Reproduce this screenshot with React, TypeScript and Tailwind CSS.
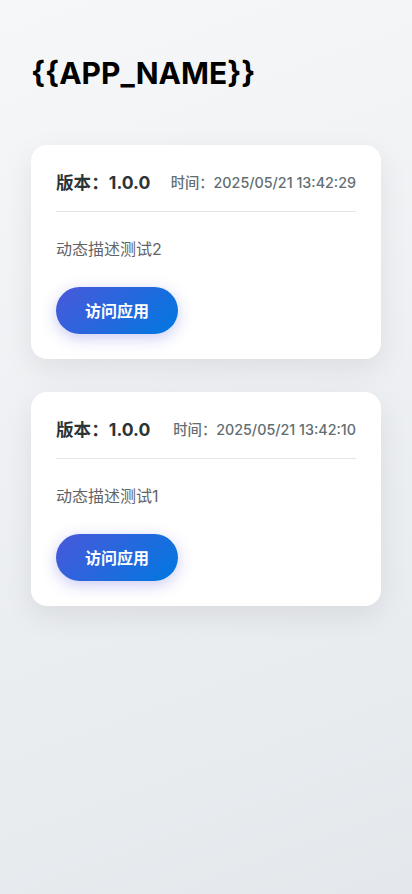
import React from "react";

const items = [
  { version: "1.0.0", time: "2025/05/21 13:42:29", desc: "动态描述测试2" },
  { version: "1.0.0", time: "2025/05/21 13:42:10", desc: "动态描述测试1" },
];

export default function App() {
  return (
    <div
      className="min-h-[894px] w-full bg-[linear-gradient(160deg,#f6f7f9_0%,#e4e8ec_100%)] px-[31px] pt-[55px] pb-10"
      style={{ fontFamily: 'Inter, "Noto Sans CJK SC", sans-serif' }}
    >
      <h1 className="text-[30px] leading-[36px] font-bold text-black mb-[54px]">{"{{APP_NAME}}"}</h1>
      <div className="flex flex-col gap-[33px]">
        {items.map((it, i) => (
          <div
            key={i}
            className="bg-white rounded-[16px] px-[25px] pt-[25px] pb-[25px] shadow-[0_10px_30px_rgba(0,0,0,0.08)]"
          >
            <div className="flex items-center justify-between pb-[15px] border-b border-[#e3e5e8] h-[42px]">
              <span className="text-[17.6px] font-bold text-[#2d3436]">版本：{it.version}</span>
              <span className="text-[14.3px] font-medium text-[#636e72]">时间：{it.time}</span>
            </div>
            <p className="mt-[25px] text-[16px] leading-[24px] text-[#5f6468]">{it.desc}</p>
            <button className="mt-[26px] h-[47px] w-[122px] rounded-full bg-[linear-gradient(135deg,#4a58da_0%,#0078e0_100%)] text-white text-[16px] font-bold shadow-[0_4px_15px_rgba(80,80,220,0.3)]">
              访问应用
            </button>
          </div>
        ))}
      </div>
    </div>
  );
}
